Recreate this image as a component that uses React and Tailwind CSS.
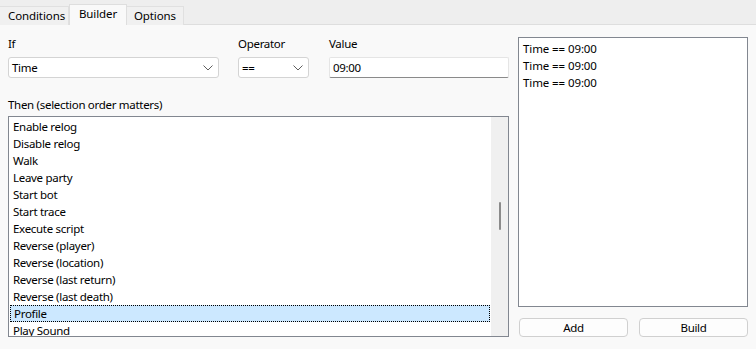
import React from "react";

const items = [
  "Enable relog",
  "Disable relog",
  "Walk",
  "Leave party",
  "Start bot",
  "Start trace",
  "Execute script",
  "Reverse (player)",
  "Reverse (location)",
  "Reverse (last return)",
  "Reverse (last death)",
  "Profile",
  "Play Sound",
];

function Chevron() {
  return (
    <svg width="10" height="6" viewBox="0 0 10 6" className="shrink-0">
      <polyline points="0.5,0.5 5,5 9.5,0.5" fill="none" stroke="#5f5f5f" strokeWidth="1" />
    </svg>
  );
}

export default function App() {
  return (
    <div
      className="w-[756px] h-[349px] bg-[#f9f9f9] text-[11.5px] tracking-[-0.3px] text-black overflow-hidden flex flex-col"
      style={{ fontFamily: '"Noto Sans", sans-serif' }}
    >
      {/* tab bar */}
      <div className="h-[25px] bg-[#eeeeee] border-b border-[#dedede] flex items-end shrink-0 tracking-[-0.1px]">
        <div className="h-[19px] w-[69px] bg-[#f0f0f0] border-r border-t border-[#e0e0e0] flex items-center pl-[8px] leading-none mb-[-1px] pb-[1px]">
          Conditions
        </div>
        <div className="h-[21px] w-[58px] bg-[#f9f9f9] border-x border-t border-[#dedede] flex items-center justify-center leading-none mb-[-1px] pb-[3px]">
          Builder
        </div>
        <div className="h-[19px] w-[57px] bg-[#f0f0f0] border-r border-t border-[#e0e0e0] flex items-center justify-center leading-none mb-[-1px] pb-[1px]">
          Options
        </div>
      </div>

      <div className="flex pl-[8px] flex-1">
        {/* left column */}
        <div className="w-[501px] flex flex-col">
          <div className="flex pt-[11px]">
            <div className="w-[211px] flex flex-col">
              <div className="h-[16px] leading-[16px]">If</div>
              <div className="mt-[5px] h-[21px] bg-white border border-[#d4d4d4] rounded-[3px] flex items-center justify-between pl-[3px] pr-[5px]">
                <span>Time</span>
                <Chevron />
              </div>
            </div>
            <div className="w-[71px] ml-[19px] flex flex-col">
              <div className="h-[16px] leading-[16px]">Operator</div>
              <div className="mt-[5px] h-[21px] bg-white border border-[#d4d4d4] rounded-[3px] flex items-center justify-between pl-[3px] pr-[5px]">
                <span>==</span>
                <Chevron />
              </div>
            </div>
            <div className="w-[180px] ml-[20px] flex flex-col">
              <div className="h-[16px] leading-[16px]">Value</div>
              <div className="mt-[5px] h-[21px] bg-white border border-[#e5e5e5] border-b-[#8a8a8a] rounded-[2px] flex items-center pl-[3px]">
                <span>09:00</span>
              </div>
            </div>
          </div>

          <div className="mt-[19px] h-[16px] leading-[16px]">Then (selection order matters)</div>

          <div className="mt-[3px] h-[221px] bg-white border border-[#828790] flex overflow-hidden">
            <div className="flex-1 pt-[1px] flex flex-col overflow-hidden">
              {items.map((it) => (
                <div
                  key={it}
                  className={
                    it === "Profile"
                      ? "h-[17px] shrink-0 mx-[1px] bg-[#cce8ff] border border-dotted border-black flex items-center pl-[3px] leading-none"
                      : "h-[17px] shrink-0 flex items-center pl-[4px] leading-none"
                  }
                >
                  {it}
                </div>
              ))}
            </div>
            <div className="w-[17px] bg-[#f0f0f0] flex justify-center pt-[85px]">
              <div className="w-[2px] h-[28px] bg-[#8b8b8b] rounded-full" />
            </div>
          </div>
        </div>

        {/* right column */}
        <div className="w-[230px] ml-[9px] flex flex-col pt-[12px]">
          <div className="h-[270px] bg-white border border-[#828790] pt-[2px] pl-[4px] flex flex-col tracking-[-0.1px]">
            {[0, 1, 2].map((i) => (
              <div key={i} className="h-[17px] flex items-center leading-none">
                Time == 09:00
              </div>
            ))}
          </div>
          <div className="mt-[11px] flex justify-between">
            <div className="w-[109px] h-[19px] bg-[#fdfdfd] border border-[#d0d0d0] rounded-[4px] flex items-center justify-center leading-none ml-[1px]">
              Add
            </div>
            <div className="w-[109px] h-[19px] bg-[#fdfdfd] border border-[#d0d0d0] rounded-[4px] flex items-center justify-center leading-none">
              Build
            </div>
          </div>
        </div>
      </div>
    </div>
  );
}
